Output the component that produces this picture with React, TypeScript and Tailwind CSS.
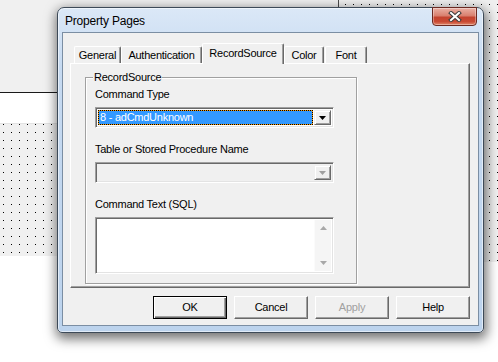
import React from 'react';

const ui = "font-['Liberation_Sans',Arial,sans-serif] text-[11px] tracking-[-0.25px] leading-[13px] text-black";

function Dots({ id, ox, oy }: { id: string; ox: number; oy: number }) {
    return (
        <svg width="100%" height="100%" className="block">
            <defs>
                <pattern id={id} x={ox} y={oy} width="8" height="8" patternUnits="userSpaceOnUse">
                    <rect x="0" y="0" width="1" height="1" fill="#000" />
                </pattern>
            </defs>
            <rect width="100%" height="100%" fill={`url(#${id})`} />
        </svg>
    );
}

function Arrow({ color = '#000', up = false }: { color?: string; up?: boolean }) {
    return (
        <svg width="7" height="4" viewBox="0 0 7 4" className="block">
            <polygon points={up ? '3.5,0 7,4 0,4' : '0,0 7,0 3.5,4'} fill={color} />
        </svg>
    );
}

function Tab({ label, w, selected }: { label: string; w: number; selected?: boolean }) {
    if (selected) {
        return (
            <div
                style={{ width: w }}
                className="h-[21px] -mb-[1px] relative bg-[#f0f0f0] border-t border-l border-white border-r border-r-[#696969] shadow-[inset_-1px_0_0_#a0a0a0] rounded-t-[2px] flex items-center justify-center pb-[2px]"
            >
                {label}
            </div>
        );
    }
    return (
        <div
            style={{ width: w }}
            className="h-[17px] bg-[#f0f0f0] border-t border-l border-white border-r border-r-[#696969] shadow-[inset_-1px_0_0_#a0a0a0] rounded-t-[2px] flex items-center justify-center"
        >
            {label}
        </div>
    );
}

function Button({ label, primary, disabled }: { label: string; primary?: boolean; disabled?: boolean }) {
    const frame = primary
        ? 'border border-black shadow-[inset_1px_1px_0_#fff,inset_-1px_-1px_0_#696969,inset_-2px_-2px_0_#a0a0a0]'
        : 'border border-t-white border-l-white border-r-[#696969] border-b-[#696969] shadow-[inset_-1px_-1px_0_#a0a0a0]';
    return (
        <div className={`w-[74px] h-[23px] bg-[#f0f0f0] flex items-center justify-center ${frame} ${disabled ? 'text-[#a0a0a0]' : ''}`}>
            {label}
        </div>
    );
}

const sunken = 'border border-t-[#a0a0a0] border-l-[#a0a0a0] border-r-white border-b-white shadow-[inset_1px_1px_0_#696969,inset_-1px_-1px_0_#e3e3e3]';
const dropBtn = 'w-[17px] h-full flex items-center justify-center bg-[#f0f0f0] border border-t-[#f0f0f0] border-l-[#f0f0f0] border-r-[#696969] border-b-[#696969] shadow-[inset_1px_1px_0_#fff,inset_-1px_-1px_0_#a0a0a0]';

function CloseButton() {
    return (
        <div className="w-[45px] h-[19px] -mt-[1px] rounded-b-[4px] border border-[#6b2a22] bg-[linear-gradient(180deg,#eab0a4_0%,#d9806f_45%,#c4432f_55%,#c94a34_80%,#e0876a_100%)] shadow-[inset_0_0_0_1px_rgba(255,255,255,0.35)] flex items-center justify-center">
            <svg width="14" height="11" viewBox="0 0 14 11">
                <path d="M3 2 L11 9 M11 2 L3 9" stroke="#3b3b3b" strokeWidth="4" strokeLinecap="square" />
                <path d="M3 2 L11 9 M11 2 L3 9" stroke="#fff" strokeWidth="2" strokeLinecap="square" />
            </svg>
        </div>
    );
}

export default function App() {
    return (
        <div className={`relative w-[498px] h-[362px] overflow-hidden bg-white ${ui}`}>
            {/* designer backdrop */}
            <div className="absolute left-[339px] top-0 w-[159px] h-[262px] bg-[#f0f0f0]">
                <Dots id="dr" ox={6} oy={4} />
            </div>
            <div className="absolute left-0 top-0 w-[339px] h-[93px] bg-[#f0f0f0] border-r border-r-[#4a4a4a] border-b border-b-[#1a1a1a]" />
            <div className="absolute left-0 top-[93px] w-[339px] h-[31px] bg-white border-b border-b-[#e3e3e3]" />
            <div className="absolute left-0 top-[124px] w-[339px] h-[132px] bg-[#f0f0f0]">
                <Dots id="dl" ox={3} oy={8} />
            </div>

            {/* Property Pages window */}
            <div className="absolute left-[57px] top-[7px] w-[427px] h-[326px] flex flex-col px-[4px] pb-[6px] rounded-t-[7px] rounded-b-[5px] border border-[#3d4a58] bg-[linear-gradient(180deg,#dbe8f7_0%,#c6daf1_18%,#bcd3ed_100%)] shadow-[inset_0_0_0_1px_rgba(255,255,255,0.55),1px_4px_12px_2px_rgba(0,0,0,0.55)]">
                <div className="h-[24px] flex items-start justify-between">
                    <span className="pl-[3px] pt-[6px] text-[12px] leading-[14px] tracking-[-0.2px]">Property Pages</span>
                    <div className="mr-[2px]">
                        <CloseButton />
                    </div>
                </div>

                <div className="flex-1 border border-[#7b8ea3] bg-[#f0f0f0] flex flex-col pl-[7px] pt-[10px]">
                    <div className="relative z-10 flex items-end h-[20px] pl-[4px]">
                        <Tab label="General" w={47} />
                        <Tab label="Authentication" w={81} />
                        <Tab label="RecordSource" w={82} selected />
                        <Tab label="Color" w={40} />
                        <div className="ml-[1px]">
                            <Tab label="Font" w={42} />
                        </div>
                    </div>

                    <div className="w-[400px] h-[225px] border-t border-l border-white border-r border-b border-r-[#696969] border-b-[#696969] shadow-[inset_-1px_-1px_0_#a0a0a0] pl-[14px] pt-[13px]">
                        <div className="relative w-[272px] h-[207px] border border-[#a0a0a0] shadow-[inset_1px_1px_0_#fff,1px_1px_0_#fff]">
                            <span className="absolute left-[7px] -top-[7px] px-[1px] bg-[#f0f0f0]">RecordSource</span>

                            <div className="flex flex-col pl-[9px] pt-[10px]">
                                <span>Command Type</span>
                                <div className={`mt-[6px] w-[239px] h-[21px] bg-white p-[1px] ${sunken}`}>
                                    <div className="flex h-full p-[1px] gap-[1px]">
                                        <div className="flex-1 bg-[#ff9a00] border border-dotted border-black">
                                            <div className="h-full bg-[#3399ff] text-white flex items-center pl-[1px]">
                                                8 - adCmdUnknown
                                            </div>
                                        </div>
                                        <div className={dropBtn}>
                                            <Arrow />
                                        </div>
                                    </div>
                                </div>

                                <span className="mt-[15px]">Table or Stored Procedure Name</span>
                                <div className={`mt-[6px] w-[239px] h-[21px] bg-[#f0f0f0] p-[2px] flex justify-end ${sunken}`}>
                                    <div className={dropBtn}>
                                        <Arrow color="#a0a0a0" />
                                    </div>
                                </div>

                                <span className="mt-[15px]">Command Text (SQL)</span>
                                <div className={`mt-[6px] w-[239px] h-[57px] bg-white p-[2px] flex justify-end ${sunken}`}>
                                    <div className="w-[17px] h-full bg-[#f5f5f5] border-l border-l-[#fbfbfb] flex flex-col items-center justify-between py-[6px]">
                                        <Arrow color="#a8a8a8" up />
                                        <Arrow color="#a8a8a8" />
                                    </div>
                                </div>
                            </div>
                        </div>
                    </div>

                    <div className="w-[400px] mt-[8px] flex justify-end gap-[7px]">
                        <Button label="OK" primary />
                        <Button label="Cancel" />
                        <Button label="Apply" disabled />
                        <Button label="Help" />
                    </div>
                </div>
            </div>
        </div>
    );
}
